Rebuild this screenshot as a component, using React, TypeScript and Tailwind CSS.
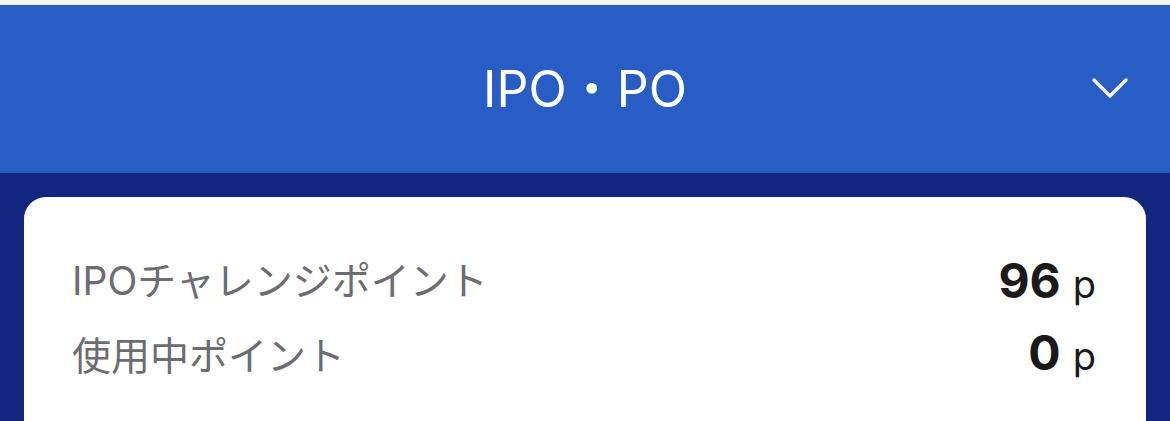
import React from "react";

export default function App() {
  return (
    <div className="w-[1170px] h-[421px] overflow-hidden bg-[#13267f]">
      <div className="h-[5px] bg-[#f4f5f8]" />
      <div className="h-[168px] bg-[#285dc5] grid grid-cols-[1fr_auto_1fr] items-center">
        <div />
        <div className="text-white text-[50px] leading-none font-['Inter','Noto_Sans_CJK_JP',sans-serif] tracking-[0px]">
          IPO・PO
        </div>
        <div className="flex justify-end pr-[42px]">
          <svg width="36" height="22" viewBox="0 0 36 22" fill="none">
            <path d="M2 2 L18 18 L34 2" stroke="white" strokeWidth="3.2" strokeLinecap="round" strokeLinejoin="round" />
          </svg>
        </div>
      </div>
      <div className="px-[24px] pt-[24px]">
        <div className="bg-white rounded-[22px] h-[300px] pl-[48px] pr-[50px] pt-[48px]">
          <div className="flex items-center justify-between h-[72px]">
            <span className="text-[39px] text-[#6c6c72] font-['Inter','Noto_Sans_CJK_JP',sans-serif]">IPOチャレンジポイント</span>
            <span className="flex items-baseline font-['Inter',sans-serif]">
              <span className="text-[48px] font-bold text-[#1a1a1a]">96</span>
              <span className="text-[38px] text-[#1a1a1a] ml-[12px]">p</span>
            </span>
          </div>
          <div className="flex items-center justify-between h-[72px]">
            <span className="text-[39px] text-[#6c6c72] font-['Noto_Sans_CJK_JP',sans-serif]">使用中ポイント</span>
            <span className="flex items-baseline font-['Inter',sans-serif]">
              <span className="text-[48px] font-bold text-[#1a1a1a]">0</span>
              <span className="text-[38px] text-[#1a1a1a] ml-[12px]">p</span>
            </span>
          </div>
        </div>
      </div>
    </div>
  );
}
